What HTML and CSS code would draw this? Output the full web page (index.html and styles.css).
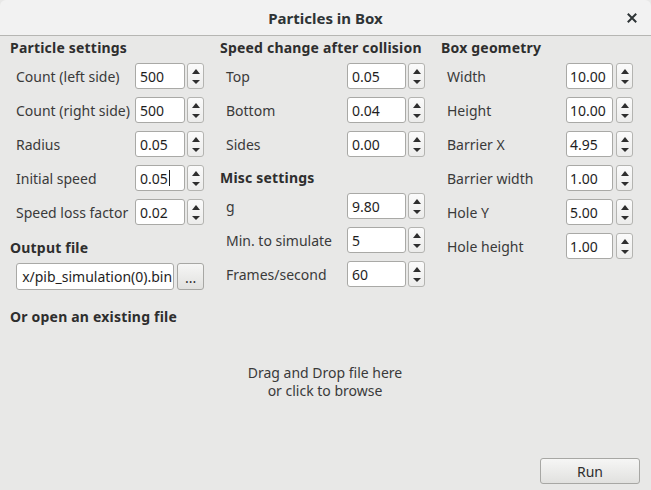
FILE: index.html
```html
<!DOCTYPE html>
<html>
<head>
<meta charset="utf-8">
<link rel="stylesheet" href="styles.css">
</head>
<body>
<div class="window">
  <header class="titlebar">
    <span class="title">Particles in Box</span>
    <span class="close">
      <svg width="10" height="10" viewBox="0 0 10 10"><path d="M1.5 1.5 L8.5 8.5 M8.5 1.5 L1.5 8.5" stroke="#2e3436" stroke-width="2" stroke-linecap="square"/></svg>
    </span>
  </header>
  <main class="content">
    <div class="columns">
      <section class="col col1">
        <h2 class="heading">Particle settings</h2>
        <div class="row"><span class="label">Count (left side)</span><div class="spin"><div class="field">500</div><div class="arrows"><span class="up"></span><span class="down"></span></div></div></div>
        <div class="row"><span class="label">Count (right side)</span><div class="spin"><div class="field">500</div><div class="arrows"><span class="up"></span><span class="down"></span></div></div></div>
        <div class="row"><span class="label">Radius</span><div class="spin"><div class="field">0.05</div><div class="arrows"><span class="up"></span><span class="down"></span></div></div></div>
        <div class="row"><span class="label">Initial speed</span><div class="spin"><div class="field">0.05<span class="caret"></span></div><div class="arrows"><span class="up"></span><span class="down"></span></div></div></div>
        <div class="row"><span class="label">Speed loss factor</span><div class="spin"><div class="field">0.02</div><div class="arrows"><span class="up"></span><span class="down"></span></div></div></div>
        <h2 class="heading output">Output file</h2>
        <div class="filerow"><div class="field file">x/pib_simulation(0).bin</div><button class="btn browse">...</button></div>
      </section>
      <section class="col col2">
        <h2 class="heading">Speed change after collision</h2>
        <div class="row"><span class="label">Top</span><div class="spin"><div class="field">0.05</div><div class="arrows"><span class="up"></span><span class="down"></span></div></div></div>
        <div class="row"><span class="label">Bottom</span><div class="spin"><div class="field">0.04</div><div class="arrows"><span class="up"></span><span class="down"></span></div></div></div>
        <div class="row"><span class="label">Sides</span><div class="spin"><div class="field">0.00</div><div class="arrows"><span class="up"></span><span class="down"></span></div></div></div>
        <h2 class="heading misc">Misc settings</h2>
        <div class="row"><span class="label">g</span><div class="spin"><div class="field">9.80</div><div class="arrows"><span class="up"></span><span class="down"></span></div></div></div>
        <div class="row"><span class="label">Min. to simulate</span><div class="spin"><div class="field">5</div><div class="arrows"><span class="up"></span><span class="down"></span></div></div></div>
        <div class="row"><span class="label">Frames/second</span><div class="spin"><div class="field">60</div><div class="arrows"><span class="up"></span><span class="down"></span></div></div></div>
      </section>
      <section class="col col3">
        <h2 class="heading">Box geometry</h2>
        <div class="row"><span class="label">Width</span><div class="spin"><div class="field">10.00</div><div class="arrows"><span class="up"></span><span class="down"></span></div></div></div>
        <div class="row"><span class="label">Height</span><div class="spin"><div class="field">10.00</div><div class="arrows"><span class="up"></span><span class="down"></span></div></div></div>
        <div class="row"><span class="label">Barrier X</span><div class="spin"><div class="field">4.95</div><div class="arrows"><span class="up"></span><span class="down"></span></div></div></div>
        <div class="row"><span class="label">Barrier width</span><div class="spin"><div class="field">1.00</div><div class="arrows"><span class="up"></span><span class="down"></span></div></div></div>
        <div class="row"><span class="label">Hole Y</span><div class="spin"><div class="field">5.00</div><div class="arrows"><span class="up"></span><span class="down"></span></div></div></div>
        <div class="row"><span class="label">Hole height</span><div class="spin"><div class="field">1.00</div><div class="arrows"><span class="up"></span><span class="down"></span></div></div></div>
      </section>
    </div>
    <h2 class="heading open">Or open an existing file</h2>
    <div class="drop"><div>Drag and Drop file here</div><div>or click to browse</div></div>
    <div class="actions"><button class="btn run">Run</button></div>
  </main>
</div>
</body>
</html>
```
FILE: styles.css
```css
html, body {
  margin: 0;
  padding: 0;
  background: #e8e8e7;
}
body {
  font-family: "Noto Sans", "DejaVu Sans", sans-serif;
  font-size: 14px;
  color: #3a3a3a;
}
.window {
  width: 651px;
  height: 490px;
  display: flex;
  flex-direction: column;
  background: #e8e8e7;
  border-radius: 6px 6px 0 0;
  overflow: hidden;
}
.titlebar {
  height: 35px;
  flex: none;
  background: #f2f2f2;
  border-bottom: 1px solid #b6b6b3;
  display: flex;
  align-items: center;
  justify-content: center;
  position: relative;
}
.title {
  font-weight: bold;
  font-size: 15px;
  color: #2e3436;
}
.close {
  position: absolute;
  right: 14px;
  top: 13px;
  width: 10px;
  height: 10px;
  display: flex;
}
.content {
  flex: 1;
  display: flex;
  flex-direction: column;
  padding: 4px 11px 0 10px;
}
.columns {
  display: flex;
  gap: 16px;
}
.col {
  display: flex;
  flex-direction: column;
  gap: 8px;
}
.col1 { width: 194px; }
.col2 { width: 205px; }
.col3 { width: 192px; }
.heading {
  margin: 0 0 -1px 0;
  font-size: 14px;
  font-weight: bold;
  line-height: 16px;
  letter-spacing: 0.2px;
  color: #2e2e2e;
}
.heading.misc { margin-top: 5px; }
.heading.output { margin-top: 7px; }
.row {
  display: flex;
  align-items: center;
  height: 26px;
}
.label {
  flex: 1;
  padding-left: 6px;
  white-space: nowrap;
}
.spin {
  display: flex;
  height: 26px;
  gap: 2px;
}
.field {
  box-sizing: border-box;
  height: 26px;
  background: #ffffff;
  border: 1px solid #a9a9a6;
  border-radius: 3px;
  padding: 0 4px;
  display: flex;
  align-items: center;
  color: #1e1e1e;
  white-space: nowrap;
  overflow: hidden;
}
.col1 .field { width: 50px; }
.col2 .field { width: 59px; }
.col3 .field { width: 47px; padding-left: 3px; }
.col3 .spin { gap: 3px; }
.caret {
  display: inline-block;
  width: 1px;
  height: 16px;
  background: #1e1e1e;
  margin-left: 1px;
}
.arrows {
  box-sizing: border-box;
  width: 17px;
  height: 26px;
  border: 1px solid #b4b4b1;
  border-radius: 3px;
  background: linear-gradient(#fbfbfb, #ececeb);
  display: flex;
  flex-direction: column;
  align-items: center;
  justify-content: space-between;
  padding: 5px 0 4px;
}
.up {
  width: 0;
  height: 0;
  border-left: 4px solid transparent;
  border-right: 4px solid transparent;
  border-bottom: 5px solid #2e2e2e;
}
.down {
  width: 0;
  height: 0;
  border-left: 4px solid transparent;
  border-right: 4px solid transparent;
  border-top: 4px solid #2e2e2e;
}
.filerow {
  display: flex;
  gap: 3px;
  padding-left: 6px;
  height: 27px;
}
.field.file {
  width: 159px;
  height: 27px;
  padding: 0 1px 0 0;
  justify-content: flex-end;
}
.btn {
  box-sizing: border-box;
  font-family: inherit;
  font-size: 14px;
  color: #2e2e2e;
  border: 1px solid #a7a7a4;
  border-radius: 3px;
  background: linear-gradient(#f6f6f5, #e1e1df);
  padding: 0;
}
.browse {
  width: 27px;
  height: 27px;
  padding-top: 2px;
}
.heading.open {
  margin-top: 19px;
}
.drop {
  margin-top: 40px;
  display: flex;
  flex-direction: column;
  align-items: center;
  line-height: 18px;
  gap: 0;
  color: #3a3a3a;
}
.actions {
  margin-top: auto;
  margin-bottom: 6px;
  display: flex;
  justify-content: flex-end;
}
.run {
  width: 100px;
  height: 26px;
}
```
